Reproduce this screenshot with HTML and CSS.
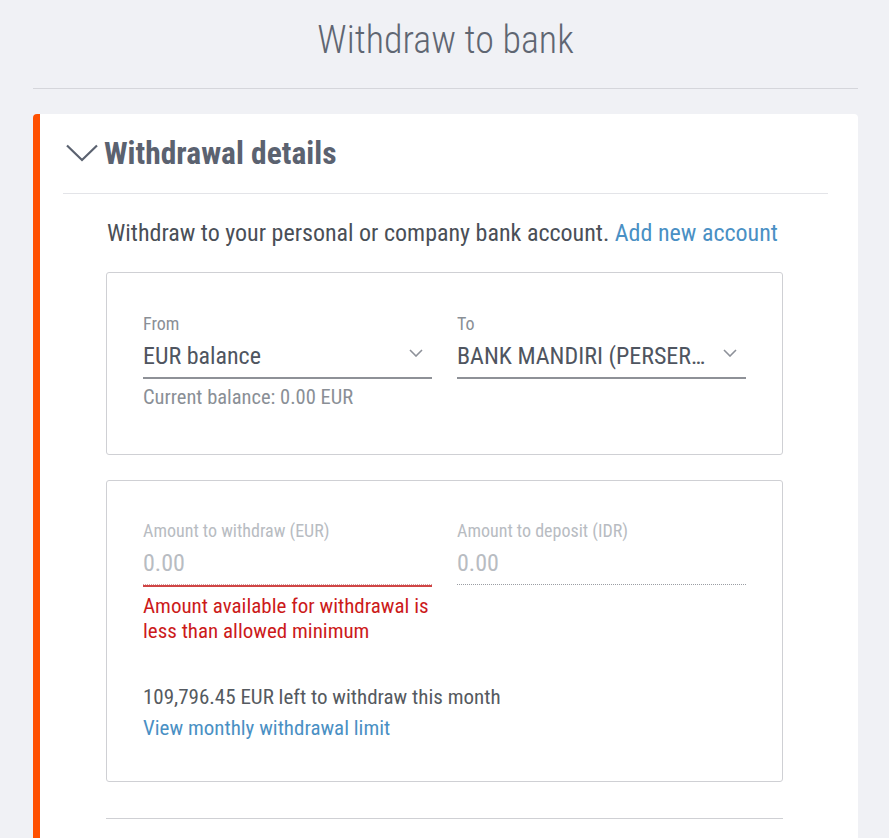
FILE: index.html
```html
<!DOCTYPE html>
<html lang="en">
<head>
    <meta charset="UTF-8">
    <meta name="viewport" content="width=device-width, initial-scale=1.0">
    <title>Withdraw to bank</title>
    <link rel="stylesheet" href="styles.css">
</head>
<body>
    <div class="page">
        <h1 class="page-title">Withdraw to bank</h1>

        <div class="card">
            <div class="card-head">
                <svg class="head-chevron" width="32" height="18" viewBox="0 0 32 18">
                    <polyline points="1,1.5 16,16 31,1.5" fill="none" stroke="#5b6270" stroke-width="2.2" />
                </svg>
                <h2>Withdrawal details</h2>
            </div>

            <div class="card-body">
                <p class="intro">Withdraw to your personal or company bank account. <a href="#">Add new account</a></p>

                <div class="box box-accounts">
                    <div class="field">
                        <label>From</label>
                        <div class="select">
                            <span class="select-value">EUR balance</span>
                            <svg class="select-arrow" width="14" height="8" viewBox="0 0 14 8">
                                <polyline points="1,1 7,7 13,1" fill="none" stroke="#8d9199" stroke-width="1.6" />
                            </svg>
                        </div>
                        <div class="helper">Current balance: 0.00 EUR</div>
                    </div>
                    <div class="field">
                        <label>To</label>
                        <div class="select">
                            <span class="select-value">BANK MANDIRI (PERSERO)</span>
                            <svg class="select-arrow" width="14" height="8" viewBox="0 0 14 8">
                                <polyline points="1,1 7,7 13,1" fill="none" stroke="#8d9199" stroke-width="1.6" />
                            </svg>
                        </div>
                    </div>
                </div>

                <div class="box box-amounts">
                    <div class="amount-row">
                        <div class="field disabled">
                            <label>Amount to withdraw (EUR)</label>
                            <div class="input input-error">0.00</div>
                            <div class="error">Amount available for withdrawal is less than allowed minimum</div>
                        </div>
                        <div class="field disabled">
                            <label>Amount to deposit (IDR)</label>
                            <div class="input">0.00</div>
                        </div>
                    </div>
                    <div class="limit">
                        <div>109,796.45 EUR left to withdraw this month</div>
                        <a href="#">View monthly withdrawal limit</a>
                    </div>
                </div>

                <div class="card-divider"></div>
            </div>
        </div>
    </div>
</body>
</html>
```

FILE: styles.css
```css
body {
    margin: 0;
    background-color: #f0f1f5;
    font-family: Roboto, "Liberation Sans", sans-serif;
    font-stretch: condensed;
    color: #4f5560;
}

.page {
    padding: 0 31px 0 33px;
}

/* Page title */
.page-title {
    margin: 0;
    height: 88px;
    line-height: 80px;
    text-align: center;
    font-size: 38px;
    font-weight: 300;
    color: #5f6672;
    border-bottom: 1px solid #d5d6db;
}

/* Card */
.card {
    margin-top: 25px;
    background-color: #fff;
    border-left: 7px solid #ff5000;
    border-radius: 4px 4px 0 0;
    min-height: 740px;
}

.card-head {
    display: flex;
    align-items: center;
    height: 79px;
    margin: 0 30px 0 23px;
    padding-left: 3px;
    border-bottom: 1px solid #e3e4e8;
}

.head-chevron {
    margin-right: 6px;
    margin-bottom: 2px;
}

.card-head h2 {
    margin: 0;
    font-size: 31.5px;
    font-weight: 700;
    color: #5b6270;
}

.card-body {
    padding: 0 75px 0 66px;
}

.intro {
    margin: 24px 0 24px 1px;
    font-size: 24px;
    line-height: 30px;
    color: #4a4f57;
}

a {
    color: #4a90c4;
    text-decoration: none;
}

/* Boxes */
.box {
    border: 1px solid #cfd0d4;
    border-radius: 3px;
    padding: 0 36px;
}

.box-accounts {
    display: grid;
    grid-template-columns: minmax(0, 1fr) minmax(0, 1fr);
    align-items: start;
    column-gap: 25px;
    padding-top: 41px;
    box-sizing: border-box;
    height: 183px;
}

.box-amounts {
    margin-top: 25px;
    padding-top: 40px;
    padding-bottom: 37px;
}

.amount-row {
    display: grid;
    grid-template-columns: minmax(0, 1fr) minmax(0, 1fr);
    align-items: start;
    column-gap: 25px;
}

/* Fields */
.field label {
    display: block;
    font-size: 18px;
    line-height: 20px;
    color: #8a8f96;
}

.select {
    display: flex;
    align-items: center;
    height: 45px;
    box-sizing: border-box;
    border-bottom: 2px solid #8e9197;
}

.select-value {
    flex: 1;
    min-width: 0;
    font-size: 24px;
    white-space: nowrap;
    overflow: hidden;
    text-overflow: ellipsis;
    padding-right: 12px;
}

.select-arrow {
    flex-shrink: 0;
    margin-right: 9px;
    margin-bottom: 6px;
}

.helper {
    margin-top: 7px;
    font-size: 20.5px;
    line-height: 22px;
    color: #8a8f96;
}

.field.disabled label {
    color: #b8bcc2;
}

.input {
    height: 44px;
    box-sizing: border-box;
    padding-top: 4px;
    font-size: 24px;
    line-height: 36px;
    color: #b8bcc2;
    border-bottom: 1px dotted #9a9da3;
}

.input-error {
    border-bottom-color: #d9a0a0;
    box-shadow: 0 2px 0 #d04545;
}

.error {
    margin-top: 9px;
    font-size: 21px;
    line-height: 25px;
    color: #cc1a1a;
}

.limit {
    margin-top: 38px;
    font-size: 21px;
    line-height: 31px;
    color: #555a60;
}

.card-divider {
    margin-top: 36px;
    border-top: 1px solid #cfd0d4;
}
```
